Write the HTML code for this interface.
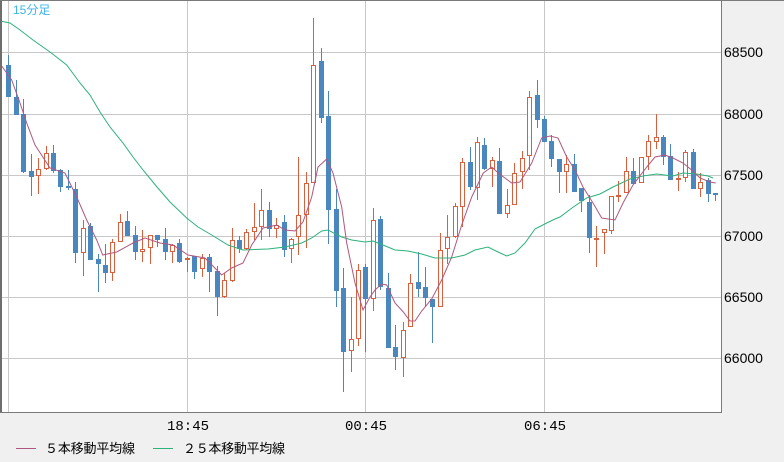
<!DOCTYPE html>
<html><head><meta charset="utf-8"><style>
html,body{margin:0;padding:0;width:784px;height:462px;overflow:hidden;background:#f0f0f0;}
svg{display:block;font-family:"Liberation Sans","Noto Sans CJK JP",sans-serif;}
</style></head><body>
<svg id="s" width="784" height="462" viewBox="0 0 784 462" xmlns="http://www.w3.org/2000/svg">
<rect x="0" y="0" width="784" height="462" fill="#f0f0f0"/>
<rect x="1" y="0" width="720" height="412" fill="#ffffff"/>
<g stroke="#c8c8c8" stroke-width="1">
<line x1="1" y1="52.5" x2="721" y2="52.5"/><line x1="1" y1="114.5" x2="721" y2="114.5"/>
<line x1="1" y1="175.5" x2="721" y2="175.5"/><line x1="1" y1="236.5" x2="721" y2="236.5"/>
<line x1="1" y1="297.5" x2="721" y2="297.5"/><line x1="1" y1="358.5" x2="721" y2="358.5"/>
<line x1="8.5" y1="0" x2="8.5" y2="412"/><line x1="187.5" y1="0" x2="187.5" y2="412"/>
<line x1="365.5" y1="0" x2="365.5" y2="412"/><line x1="544.5" y1="0" x2="544.5" y2="412"/>
</g>
<g id="c"></g>
<polyline fill="none" stroke="#2db27c" stroke-width="1" points="0,21 10,23 20,30 33,40 50,52 66.7,65 80,83 90,95 100,112 110,127 123,143 133,157 143,170 157,187 170,202 186.7,218 198,227 211.7,235 228,245 243,250 268,249 285,247 301.7,243 311.7,238 321.7,231 328,230 341.7,237 351.7,240 365,242 373,241 383,245 395,250 408,251 421.7,254 435,258 451.7,258 465,255 475,250 488,247 498,252 506.7,256 515,253 525,243 535,229 546.7,223 555,219 560,217 573.3,207 586.7,198 600,194 613,187 630,179 643,176 656.7,174 673,176 683,173 696.7,174 708,176 713,178"/>
<polyline fill="none" stroke="#b0577f" stroke-width="1" points="1.7,66 11.7,80 20,103 26.7,123 35,145 50,168 65,173 76.7,197 86.7,220 96.7,240 102.7,255 116.7,252 133,243 145,238 160,243 173,245 188,255 205,258 221.7,275 231.7,268 243,263 251.7,245 263,228 276.7,225 285,230 295,231 303,222 311.7,197 318,167 326.7,159 333,173 341.7,207 346.7,243 355,283 363,310 370,297 375,290 381.7,284 386.7,285 395,303 403.3,312 410,321 415,321 421.7,311 431.7,299 441.7,280 451.7,257 461.7,225 471.7,197 483.3,173 491.7,167 498.3,173 511.7,183 520,182 531.7,163 541.7,138 550,136 558,138 566.7,157 575,170 583,187 593,203 601.7,218 615,220 623,203 633,185 646.7,167 655,157 665,155 673,158 683,163 691.7,170 700,178 710,182 715.7,183"/>
<g fill="none" stroke="#6e6e6e" stroke-width="2"><line x1="1" y1="0" x2="1" y2="412"/></g>
<g stroke="#7a7a7a" stroke-width="1"><line x1="0" y1="0.5" x2="784" y2="0.5"/><line x1="721.5" y1="0" x2="721.5" y2="412"/><line x1="0" y1="412.5" x2="722" y2="412.5"/></g>
<text x="13" y="14" font-size="12" fill="#3cb6ea">15分足</text>
<g font-size="14" fill="#000">
<text x="724" y="57">68500</text><text x="724" y="119">68000</text><text x="724" y="180">67500</text>
<text x="724" y="241">67000</text><text x="724" y="302">66500</text><text x="724" y="363">66000</text>
<text x="188" y="430" text-anchor="middle" font-family="Liberation Mono,monospace">18:45</text>
<text x="366" y="430" text-anchor="middle" font-family="Liberation Mono,monospace">00:45</text>
<text x="545" y="430" text-anchor="middle" font-family="Liberation Mono,monospace">06:45</text>
</g>
<line x1="16" y1="448.5" x2="36" y2="448.5" stroke="#b0577f"/>
<text x="45" y="453" font-size="13" fill="#000" font-family="Liberation Sans,Noto Sans CJK JP,sans-serif" textLength="90" lengthAdjust="spacing">５本移動平均線</text>
<line x1="153" y1="448.5" x2="173" y2="448.5" stroke="#2db27c"/>
<text x="183" y="453" font-size="13" fill="#000" font-family="Liberation Sans,Noto Sans CJK JP,sans-serif" textLength="102" lengthAdjust="spacing">２５本移動平均線</text>
</svg>
<script>
var d=[
['b',65,97,55,97],['b',97,115,80,115],['b',114,172,99,173],['b',171,177,154,196],['r',169,176,158,194],
['r',153,169,146,170],['b',153,171,145,173],['b',170,187,169,192],['b',186,188,170,190],['b',189,253,182,263],
['r',228,253,220,276],['b',226,260,223,260],['b',259,264,254,292],['b',265,273,244,283],['r',242,273,239,281],
['r',222,242,214,242],['b',221,236,211,236],['b',235,252,226,260],['r',249,252,230,262],['r',235,248,235,264],
['b',235,240,235,247],['b',239,252,228,260],['r',245,252,244,263],['b',243,262,239,263],['r',258,260,257,272],
['b',256,272,256,279],['r',258,269,254,277],['b',257,272,254,292],['b',271,297,266,316],['r',280,297,273,298],
['r',240,281,228,282],['b',240,249,236,253],['r',232,249,229,250],['r',227,232,203,240],['r',210,227,189,240],
['b',210,229,202,237],['r',225,229,218,238],['b',222,250,215,257],['r',239,249,238,263],['r',215,237,157,255],
['r',183,215,172,248],['r',65,183,18,183],['b',61,118,48,123],['b',116,210,91,244],['b',209,291,189,307],
['b',288,352,268,392],['r',339,351,297,372],['r',270,339,264,346],['b',267,299,264,352],['r',220,299,208,311],
['b',219,287,216,290],['b',288,348,273,348],['b',347,357,325,370],['r',330,358,322,377],['r',283,327,274,327],
['b',282,289,252,297],['b',287,298,267,307],['b',299,307,299,343],['r',250,307,233,307],['r',237,249,215,264],
['r',206,237,203,238],['r',162,207,158,227],['b',162,187,147,190],['r',142,188,137,200],['b',145,169,138,170],
['r',160,169,157,187],['b',161,214,148,214],['r',205,214,189,218],['r',173,205,163,205],['r',158,172,151,189],
['r',97,156,91,170],['b',95,120,80,128],['b',119,142,116,142],['b',141,159,135,167],['b',159,172,159,193],
['r',164,172,155,193],['b',164,192,154,192],['b',188,201,188,212],['b',202,238,195,253],['r',238,239,226,267],
['r',229,233,229,254],['r',196,231,196,234],['r',195,196,181,202],['r',171,193,157,193],['b',171,184,158,184],
['r',157,183,157,183],['r',141,157,135,170],['r',137,142,114,149],['b',137,157,135,165],['b',156,180,144,180],
['r',178,179,172,191],['r',152,178,150,182],['b',152,189,149,189],['r',182,189,173,197],['b',180,194,178,202],
['b',193,195,193,201]];
var g=document.getElementById('c'),h='';
for(var i=0;i<d.length;i++){var c=d[i],x=Math.round(8.3+7.44*i)+0.5,col=c[0]=='b'?'#4a87bf':'#d9603f';
h+='<line x1="'+x+'" y1="'+c[3]+'" x2="'+x+'" y2="'+c[4]+'" stroke="'+col+'"/>';
if(c[0]=='b')h+='<rect x="'+(x-2.5)+'" y="'+c[1]+'" width="5" height="'+Math.max(2,c[2]-c[1])+'" fill="'+col+'"/>';
else h+='<rect x="'+(x-2)+'" y="'+(c[1]+0.5)+'" width="4" height="'+Math.max(1,c[2]-c[1]-1)+'" fill="#fff" stroke="'+col+'"/>';}
g.innerHTML=h;
</script>
</body></html>
